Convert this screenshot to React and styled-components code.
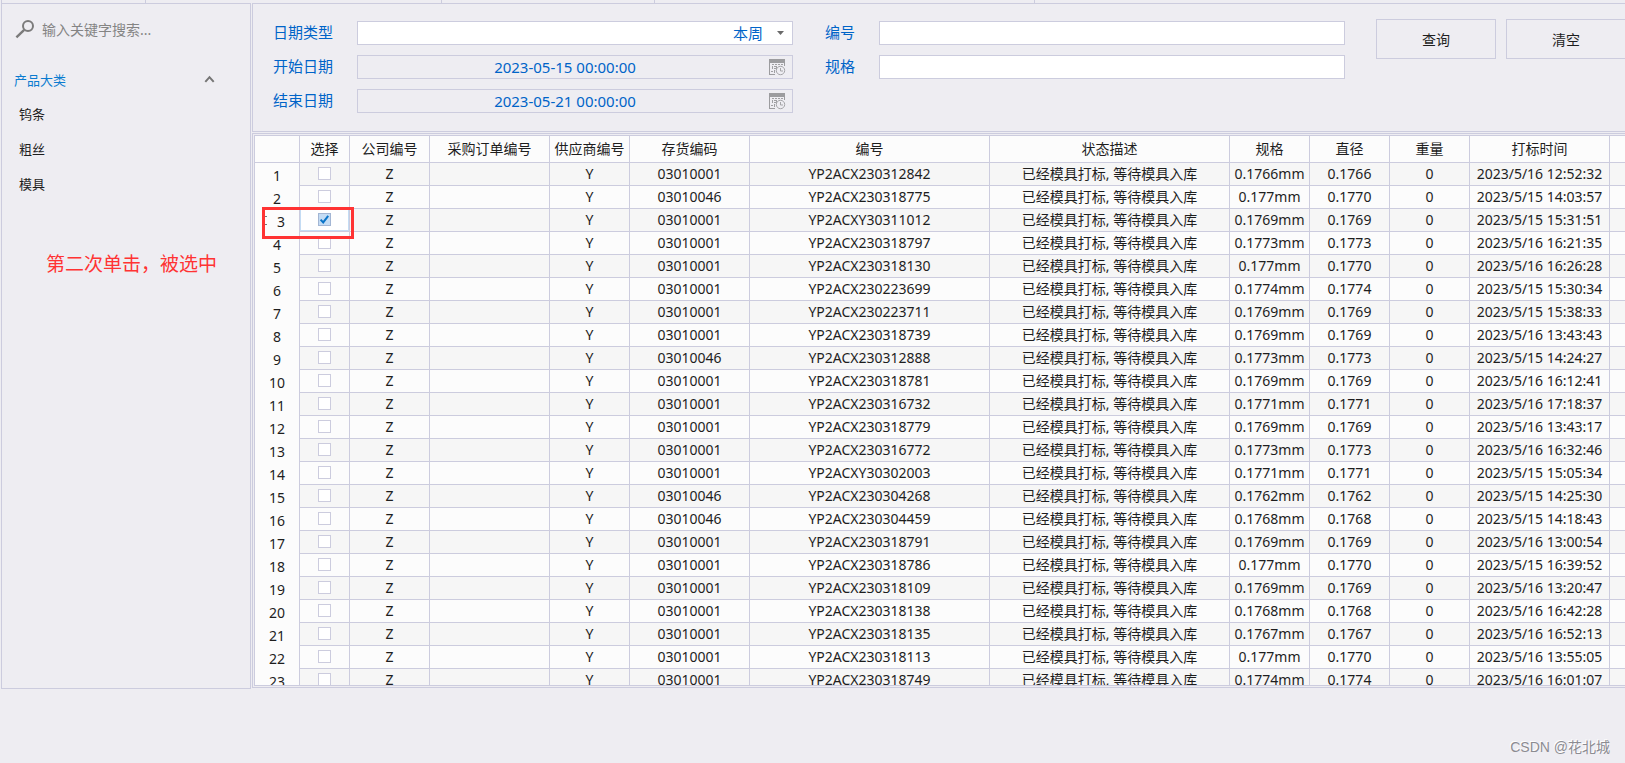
import React, {useState} from 'react';
import styled, {createGlobalStyle, css} from "styled-components";

const BACKGROUND = "#eeedf2";
const BORDER = "#ccccde";
const BLUE = "#0064c8";
const LINK_BLUE = "#0a7bd0";
const TEXT = "#1e1e1e";
const RED = "#ff3333";

const GlobalStyle = createGlobalStyle`
  * {
    box-sizing: border-box;
  }
  body {
    margin: 0;
    background: ${BACKGROUND};
    color: ${TEXT};
    font-family: "Noto Sans", "Noto Sans CJK SC", sans-serif;
    font-size: 14px;
  }
  input, select, button {
    font: inherit;
    color: inherit;
    margin: 0;
  }
`;

const Page = styled.div`
  height: 100vh;
  display: flex;
  flex-direction: column;
  overflow: hidden;
`;

const TabStrip = styled.div`
  display: grid;
  grid-template-columns: 145px 296px 213px 380px 1fr;
  height: 3px;
  flex-shrink: 0;
  margin-left: 1px;
  border-left: 1px solid ${BORDER};
  span {
    border-right: 1px solid ${BORDER};
    margin-left: -1px;
    margin-right: 1px;
  }
`;

const Main = styled.main`
  flex: 1;
  min-height: 0;
  display: flex;
  gap: 1px;
  padding-left: 1px;
`;

const Sidebar = styled.aside`
  position: relative;
  width: 250px;
  flex-shrink: 0;
  border: 1px solid ${BORDER};
`;

const SearchBox = styled.label`
  display: flex;
  align-items: center;
  gap: 6px;
  height: 50px;
  padding: 0 12px;
  margin-bottom: 8px;
  input {
    flex: 1;
    min-width: 0;
    border: none;
    outline: none;
    padding: 0;
    background: transparent;
  }
  input::placeholder {
    color: #848484;
    opacity: 1;
  }
`;

const GroupHeader = styled.button`
  display: flex;
  align-items: center;
  justify-content: space-between;
  width: 100%;
  height: 34px;
  padding: 0 35px 0 12px;
  border: none;
  background: transparent;
  color: ${LINK_BLUE};
  font-size: 13px;
  cursor: pointer;
`;

const GroupItem = styled.button`
  display: block;
  width: 100%;
  height: 35px;
  padding: 0 17px;
  border: none;
  background: transparent;
  font-size: 13px;
  text-align: left;
  cursor: pointer;
`;

const Note = styled.p`
  position: absolute;
  top: 245px;
  left: 44px;
  margin: 0;
  line-height: 28px;
  font-size: 19px;
  font-family: "Noto Sans CJK SC", sans-serif;
  color: ${RED};
`;

const Workspace = styled.div`
  flex: 1;
  min-width: 0;
  margin-right: -1px;
  padding-bottom: 1px;
  display: flex;
  flex-direction: column;
  gap: 1px;
`;

const FilterPanel = styled.form`
  display: flex;
  align-items: flex-start;
  gap: 31px;
  padding: 15px 0 16px 20px;
  border: 1px solid ${BORDER};
  border-right: none;
`;

const Fields = styled.div`
  flex: 1;
  min-width: 0;
  display: grid;
  grid-template-columns: 84px minmax(0, 436fr) 86px minmax(0, 466fr);
  row-gap: 10px;
  padding: 2px 0;
`;

const Label = styled.label`
  padding-left: ${({$second}) => $second ? "32px" : "0"};
  color: ${BLUE};
  font-size: 15px;
  line-height: 22px;
`;

const fieldBox = css`
  width: 100%;
  height: 24px;
  padding: 0 6px;
  border: 1px solid ${BORDER};
  border-radius: 0;
  background: white;
  color: ${BLUE};
  outline: none;
`;

const TextInput = styled.input`
  ${fieldBox}
`;

const FieldWrap = styled.div`
  display: grid;
  align-items: center;
  > * {
    grid-area: 1 / 1;
  }
  svg {
    justify-self: end;
    pointer-events: none;
  }
`;

const Select = styled.select`
  ${fieldBox}
  appearance: none;
  padding: 0 29px 0 6px;
  font-size: 15px;
  line-height: 22px;
  text-align: right;
  text-align-last: right;
`;

const DateInput = styled.input`
  ${fieldBox}
  padding: 0 20px 0 0;
  background: ${BACKGROUND};
  font-size: 15px;
  text-align: center;
`;

const ArrowIcon = styled.svg`
  margin-right: 9px;
`;

const CalendarSvg = styled.svg`
  margin-right: 7px;
`;

const Actions = styled.div`
  display: flex;
  gap: 10px;
`;

const ActionButton = styled.button`
  width: 120px;
  height: 40px;
  padding: 0;
  border: 1px solid ${BORDER};
  background: transparent;
  cursor: pointer;
`;

const GridPanel = styled.div`
  flex: 1;
  min-height: 0;
  display: flex;
  padding: 1px 0 1px 1px;
  border: 1px solid ${BORDER};
  border-right: none;
`;

const GridView = styled.div`
  position: relative;
  flex: 1;
  min-width: 0;
  overflow: hidden;
  border: 1px solid ${BORDER};
  border-right: none;
`;

const Table = styled.table`
  width: 100%;
  table-layout: fixed;
  border-collapse: separate;
  border-spacing: 0;
  background: #fcfcfc;
`;

const HeaderCell = styled.th`
  height: 27px;
  padding: 0;
  border-right: 1px solid ${BORDER};
  border-bottom: 1px solid ${BORDER};
  font-weight: normal;
  line-height: 26px;
  white-space: nowrap;
`;

const RowNumber = styled.th`
  height: 23px;
  padding: 2px 0 0 ${({$active}) => $active ? "8px" : "0"};
  border-right: 1px solid ${BORDER};
  background: #fcfcfc;
  font-weight: normal;
  line-height: 21px;
`;

const Cell = styled.td`
  height: 23px;
  padding: 0;
  border-right: 1px solid ${BORDER};
  border-bottom: 1px solid ${BORDER};
  line-height: 22px;
  text-align: center;
  white-space: nowrap;
  overflow: hidden;
`;

const CheckCell = styled(Cell)`
  ${({$active}) => $active && css`
    background: white;
    box-shadow: inset 0 0 0 1px #c4dcf4;
  `}
`;

const Row = styled.tr`
  background: #fcfcfc;
  &:nth-child(odd) {
    background: #f6f6f6;
  }
`;

const CheckWrap = styled.label`
  display: grid;
  justify-content: center;
  height: 22px;
  padding-top: 4px;
  > * {
    grid-area: 1 / 1;
  }
  svg {
    pointer-events: none;
  }
`;

const Checkbox = styled.input`
  appearance: none;
  width: 13px;
  height: 13px;
  border: 1px solid ${BORDER};
  background: white;
  &:checked {
    border-color: #a3b6d4;
    background: #c4dcf4;
  }
`;

const Highlight = styled.div`
  position: absolute;
  top: 71px;
  left: 7px;
  width: 92px;
  height: 32px;
  border: 3px solid ${RED};
  pointer-events: none;
  svg {
    display: block;
  }
`;

const Footer = styled.footer`
  height: 74px;
  flex-shrink: 0;
  display: flex;
  align-items: flex-end;
  justify-content: flex-end;
  padding: 0 15px 5px;
  color: #8c8c92;
  font-family: "Liberation Sans", "Noto Sans CJK SC", sans-serif;
  font-size: 14px;
  line-height: 22px;
  text-shadow: -1px -1px 0 white;
`;

const COLUMNS = [
  {title: "选择", width: 50},
  {title: "公司编号", width: 80},
  {title: "采购订单编号", width: 120},
  {title: "供应商编号", width: 80},
  {title: "存货编码", width: 120},
  {title: "编号", width: 240},
  {title: "状态描述", width: 240},
  {title: "规格", width: 80},
  {title: "直径", width: 80},
  {title: "重量", width: 80},
  {title: "打标时间", width: 140},
];

const STATUS = "已经模具打标, 等待模具入库";

// stock code, number, spec, diameter, marking time
const ROWS = [
  ["03010001", "YP2ACX230312842", "0.1766mm", "0.1766", "2023/5/16 12:52:32"],
  ["03010046", "YP2ACX230318775", "0.177mm", "0.1770", "2023/5/15 14:03:57"],
  ["03010001", "YP2ACXY30311012", "0.1769mm", "0.1769", "2023/5/15 15:31:51"],
  ["03010001", "YP2ACX230318797", "0.1773mm", "0.1773", "2023/5/16 16:21:35"],
  ["03010001", "YP2ACX230318130", "0.177mm", "0.1770", "2023/5/16 16:26:28"],
  ["03010001", "YP2ACX230223699", "0.1774mm", "0.1774", "2023/5/15 15:30:34"],
  ["03010001", "YP2ACX230223711", "0.1769mm", "0.1769", "2023/5/15 15:38:33"],
  ["03010001", "YP2ACX230318739", "0.1769mm", "0.1769", "2023/5/16 13:43:43"],
  ["03010046", "YP2ACX230312888", "0.1773mm", "0.1773", "2023/5/15 14:24:27"],
  ["03010001", "YP2ACX230318781", "0.1769mm", "0.1769", "2023/5/16 16:12:41"],
  ["03010001", "YP2ACX230316732", "0.1771mm", "0.1771", "2023/5/16 17:18:37"],
  ["03010001", "YP2ACX230318779", "0.1769mm", "0.1769", "2023/5/16 13:43:17"],
  ["03010001", "YP2ACX230316772", "0.1773mm", "0.1773", "2023/5/16 16:32:46"],
  ["03010001", "YP2ACXY30302003", "0.1771mm", "0.1771", "2023/5/15 15:05:34"],
  ["03010046", "YP2ACX230304268", "0.1762mm", "0.1762", "2023/5/15 14:25:30"],
  ["03010046", "YP2ACX230304459", "0.1768mm", "0.1768", "2023/5/15 14:18:43"],
  ["03010001", "YP2ACX230318791", "0.1769mm", "0.1769", "2023/5/16 13:00:54"],
  ["03010001", "YP2ACX230318786", "0.177mm", "0.1770", "2023/5/15 16:39:52"],
  ["03010001", "YP2ACX230318109", "0.1769mm", "0.1769", "2023/5/16 13:20:47"],
  ["03010001", "YP2ACX230318138", "0.1768mm", "0.1768", "2023/5/16 16:42:28"],
  ["03010001", "YP2ACX230318135", "0.1767mm", "0.1767", "2023/5/16 16:52:13"],
  ["03010001", "YP2ACX230318113", "0.177mm", "0.1770", "2023/5/16 13:55:05"],
  ["03010001", "YP2ACX230318749", "0.1774mm", "0.1774", "2023/5/16 16:01:07"],
];

const ACTIVE_ROW = 2;

const SearchIcon = () => (
  <svg width="22" height="20" viewBox="0 0 22 20" fill="none" stroke="#7b7b7b">
    <circle cx="14" cy="7" r="5" strokeWidth="2"/>
    <path d="M10.2 10.8 L2.4 18.4" strokeWidth="2.4"/>
  </svg>
);

const ChevronUp = () => (
  <svg width="11" height="8" viewBox="0 0 11 8" fill="none" stroke="#757575" strokeWidth="2">
    <path d="M1.3 6.8 L5.5 2.2 L9.7 6.8"/>
  </svg>
);

const CalendarIcon = () => (
  <CalendarSvg width="17" height="17" viewBox="0 0 17 17">
    <path d="M0 0H16V7H15V4H1V15H6V16H0Z" fill="#9c9c9f"/>
    <path d="M3 5h2v1H3zM6 5h2v1H6zM9 5h2v1H9zM12 5h2v1h-2zM3 7h1v3H3zM5 7h3v1H5zM7 8h1v2H7zM5 9h2v1H5zM2 12h2v1H2zM5 11h1v3H5z" fill="#a0a0a3"/>
    <circle cx="11.5" cy="11.5" r="4.2" fill={BACKGROUND} stroke="#a5a5a8"/>
    <path d="M11.5 9V12H14" fill="none" stroke="#a5a5a8"/>
  </CalendarSvg>
);

const CheckMark = () => (
  <svg width="13" height="13" viewBox="0 0 13 13" fill="none" stroke="#0a74c8" strokeWidth="2">
    <path d="M2.6 6.6 L5.2 9.4 L10.2 2.8"/>
  </svg>
);

const DateField = ({id, value}) => (
  <FieldWrap>
    <DateInput id={id} value={value} readOnly/>
    <CalendarIcon/>
  </FieldWrap>
);

const ProductMenu = () => {
  const [expanded, setExpanded] = useState(true);

  return <Sidebar>
    <SearchBox>
      <SearchIcon/>
      <input type="text" aria-label="搜索" placeholder="输入关键字搜索..."/>
    </SearchBox>
    <GroupHeader type="button" aria-expanded={expanded} onClick={() => setExpanded(prevState => !prevState)}>
      产品大类
      <ChevronUp/>
    </GroupHeader>
    {expanded && ["钨条", "粗丝", "模具"].map(name =>
      <GroupItem type="button" key={name}>{name}</GroupItem>
    )}
    <Note>第二次单击，被选中</Note>
  </Sidebar>
}

const Filters = () => (
  <FilterPanel onSubmit={e => e.preventDefault()}>
    <Fields>
      <Label htmlFor="dateType">日期类型</Label>
      <FieldWrap>
        <Select id="dateType" defaultValue="week">
          <option value="week">本周</option>
        </Select>
        <ArrowIcon width="7" height="4" viewBox="0 0 7 4"><path d="M0 0H7L3.5 4Z" fill="#6a6a6a"/></ArrowIcon>
      </FieldWrap>
      <Label htmlFor="code" $second>编号</Label>
      <TextInput id="code" type="text"/>

      <Label htmlFor="startDate">开始日期</Label>
      <DateField id="startDate" value="2023-05-15 00:00:00"/>
      <Label htmlFor="spec" $second>规格</Label>
      <TextInput id="spec" type="text"/>

      <Label htmlFor="endDate">结束日期</Label>
      <DateField id="endDate" value="2023-05-21 00:00:00"/>
    </Fields>
    <Actions>
      <ActionButton type="submit">查询</ActionButton>
      <ActionButton type="reset">清空</ActionButton>
    </Actions>
  </FilterPanel>
);

const DataGrid = () => {
  const [checked, setChecked] = useState([ACTIVE_ROW]);

  const toggle = index => {
    setChecked(prevState => prevState.includes(index)
      ? prevState.filter(item => item !== index)
      : [...prevState, index]);
  }

  return <GridPanel>
    <GridView>
      <Table>
        <colgroup>
          <col width={45}/>
          {COLUMNS.map(({title, width}) => <col key={title} width={width}/>)}
          <col/>
        </colgroup>
        <thead>
          <tr>
            <HeaderCell/>
            {COLUMNS.map(({title}) => <HeaderCell key={title} scope="col">{title}</HeaderCell>)}
            <HeaderCell/>
          </tr>
        </thead>
        <tbody>
          {ROWS.map(([stock, code, spec, diameter, time], index) => (
            <Row key={code}>
              <RowNumber scope="row" $active={index === ACTIVE_ROW}>{index + 1}</RowNumber>
              <CheckCell $active={index === ACTIVE_ROW}>
                <CheckWrap>
                  <Checkbox type="checkbox"
                            aria-label={"选择 " + (index + 1)}
                            checked={checked.includes(index)}
                            onChange={() => toggle(index)}
                  />
                  {checked.includes(index) && <CheckMark/>}
                </CheckWrap>
              </CheckCell>
              <Cell>Z</Cell>
              <Cell/>
              <Cell>Y</Cell>
              <Cell>{stock}</Cell>
              <Cell>{code}</Cell>
              <Cell>{STATUS}</Cell>
              <Cell>{spec}</Cell>
              <Cell>{diameter}</Cell>
              <Cell>0</Cell>
              <Cell>{time}</Cell>
              <Cell/>
            </Row>
          ))}
        </tbody>
      </Table>
      <Highlight>
        <svg width="3" height="18" viewBox="0 0 3 18" fill="none" stroke="#777">
          <path d="M0 6.5H2M0 14.5H2"/>
        </svg>
      </Highlight>
    </GridView>
  </GridPanel>
}

const App = () => (
  <>
    <GlobalStyle/>
    <Page>
      <TabStrip><span/><span/><span/><span/></TabStrip>
      <Main>
        <ProductMenu/>
        <Workspace>
          <Filters/>
          <DataGrid/>
        </Workspace>
      </Main>
      <Footer>CSDN @花北城</Footer>
    </Page>
  </>
);

export default App;
